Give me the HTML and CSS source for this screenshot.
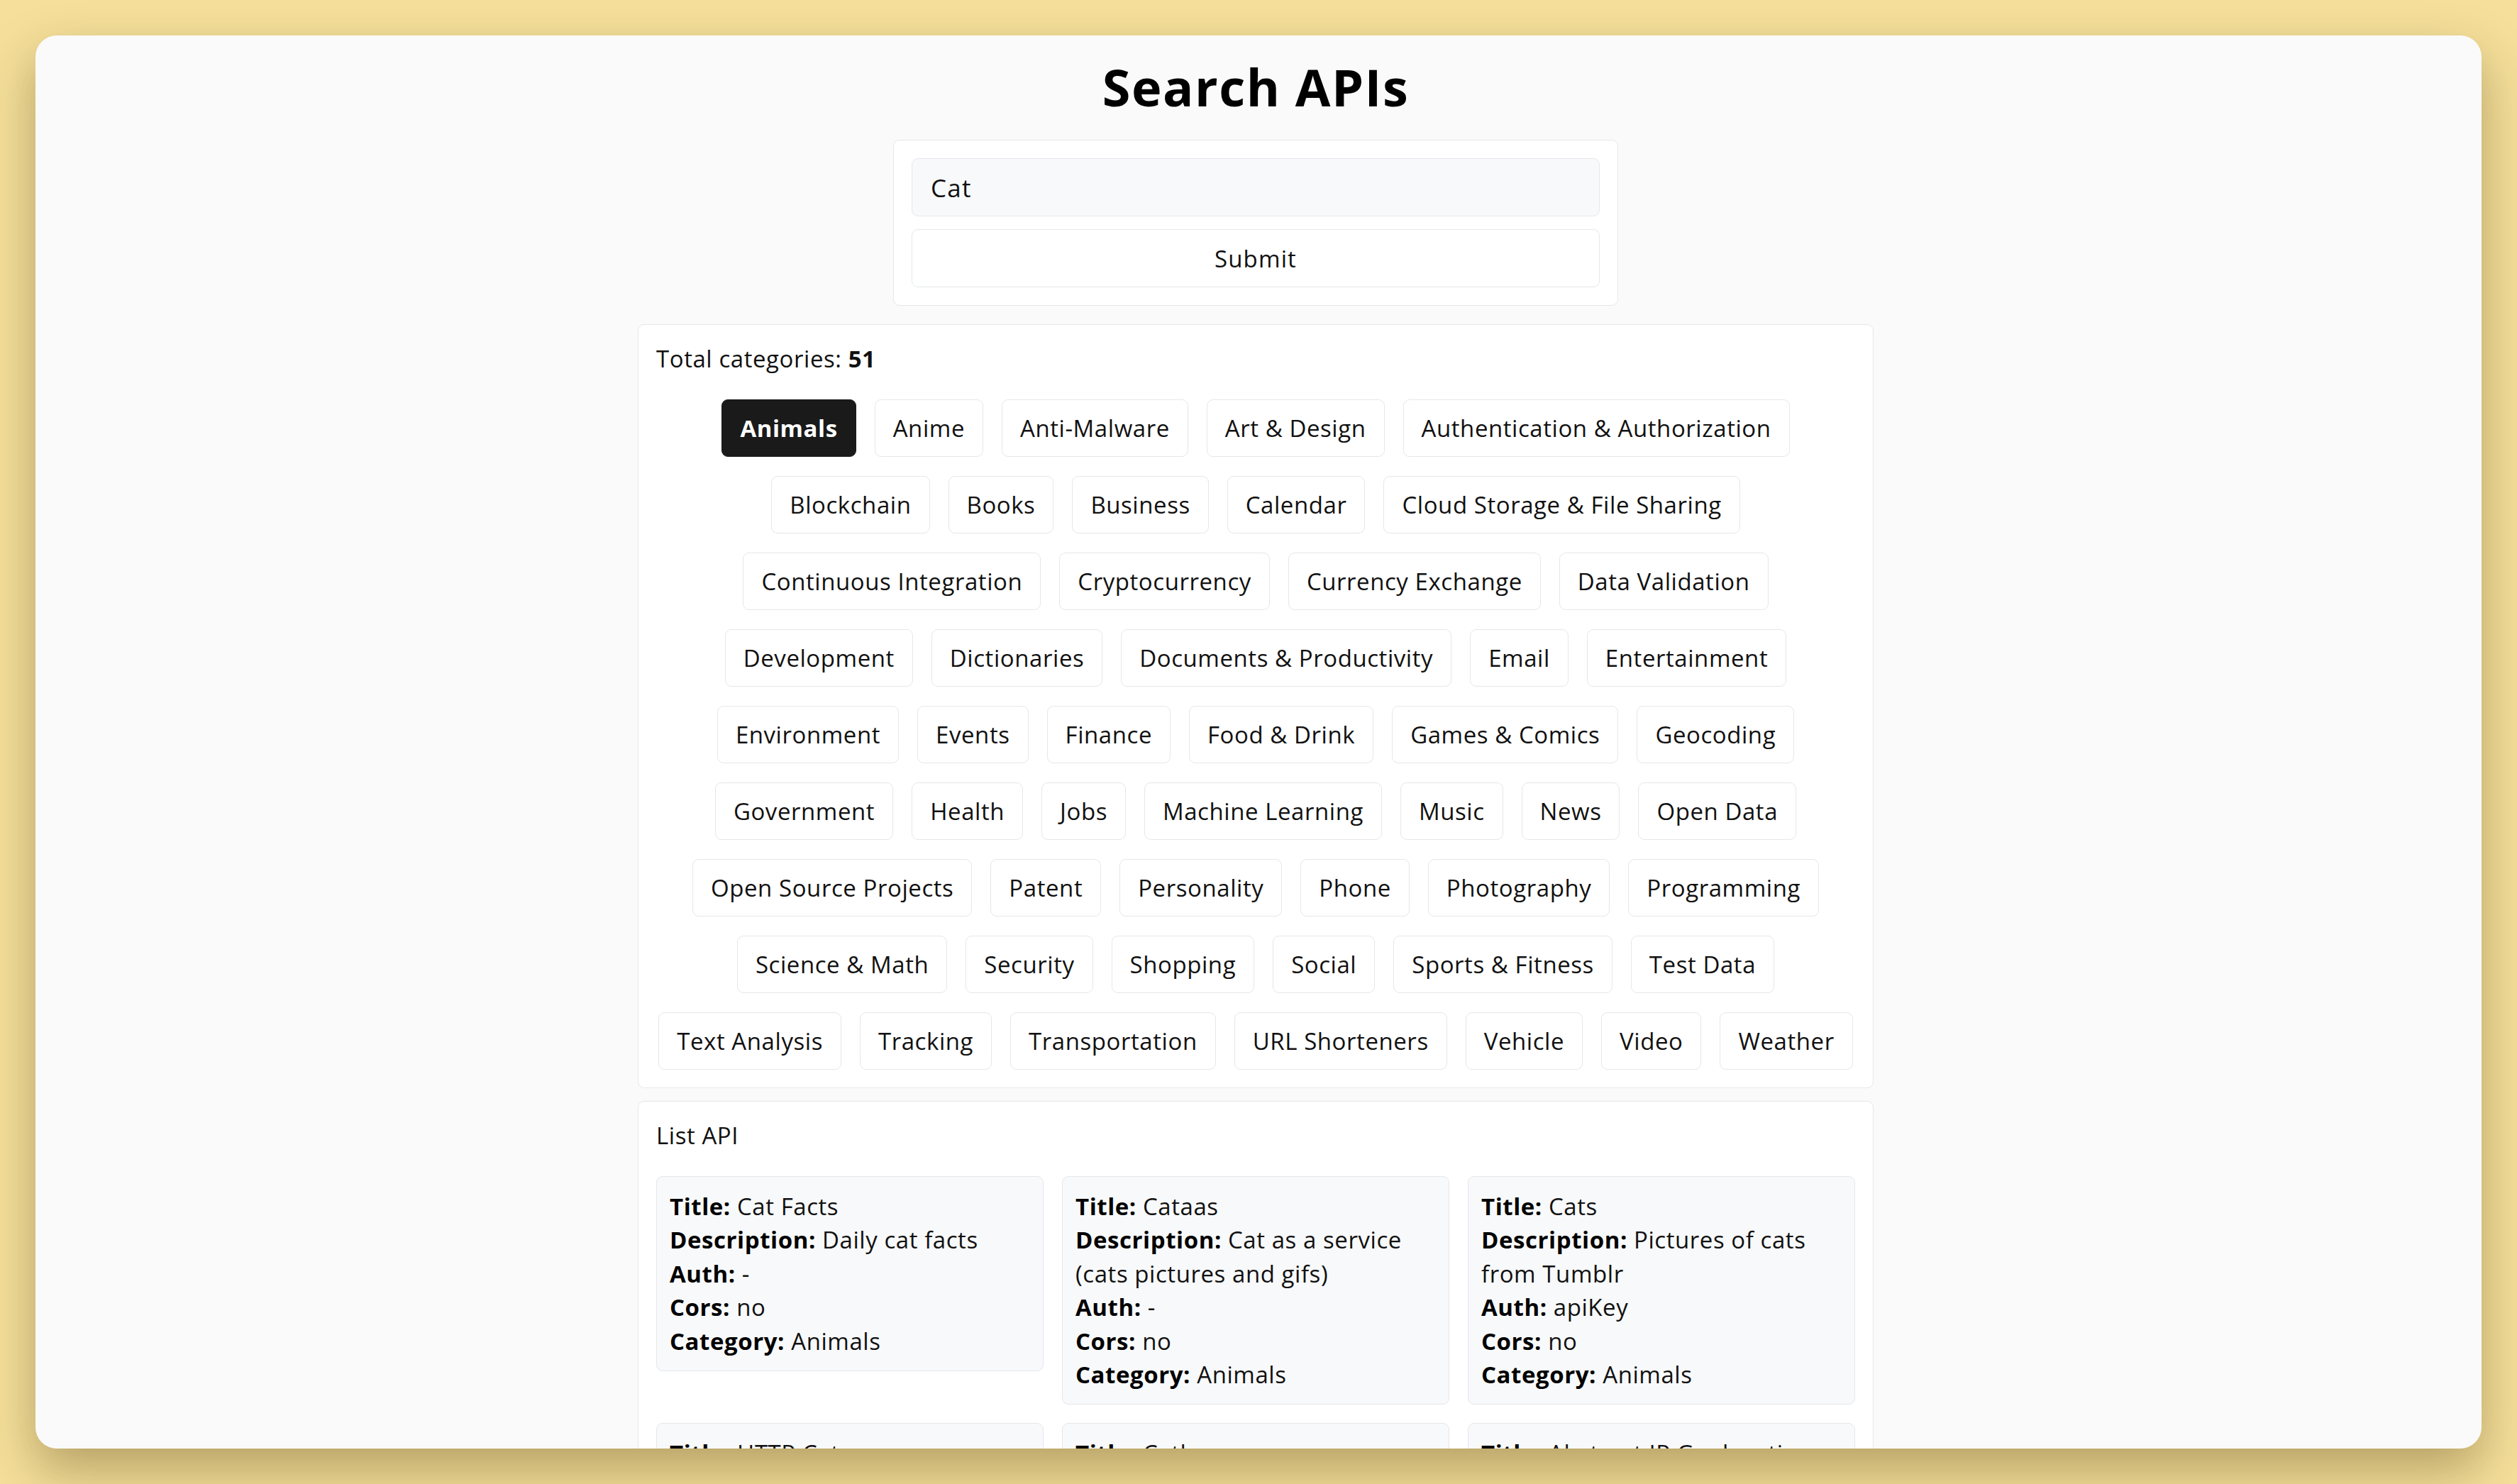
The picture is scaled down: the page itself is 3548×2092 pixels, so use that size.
FILE: index.html
```html
<!DOCTYPE html>
<html lang="en">
<head>
<meta charset="utf-8">
<title>Search APIs</title>
<link rel="stylesheet" href="styles.css">
</head>
<body>
<div class="window">
  <div class="scroll">
    <h1 class="title">Search APIs</h1>

    <form class="search-box">
      <input class="search-input" type="text" value="Cat">
      <button class="submit" type="button">Submit</button>
    </form>

    <section class="panel categories">
      <p class="panel-label">Total categories: <b>51</b></p>
      <div class="chip-rows">
        <div class="chip-row">
          <span class="chip active">Animals</span>
          <span class="chip">Anime</span>
          <span class="chip">Anti-Malware</span>
          <span class="chip">Art &amp; Design</span>
          <span class="chip">Authentication &amp; Authorization</span>
        </div>
        <div class="chip-row">
          <span class="chip">Blockchain</span>
          <span class="chip">Books</span>
          <span class="chip">Business</span>
          <span class="chip">Calendar</span>
          <span class="chip">Cloud Storage &amp; File Sharing</span>
        </div>
        <div class="chip-row">
          <span class="chip">Continuous Integration</span>
          <span class="chip">Cryptocurrency</span>
          <span class="chip">Currency Exchange</span>
          <span class="chip">Data Validation</span>
        </div>
        <div class="chip-row">
          <span class="chip">Development</span>
          <span class="chip">Dictionaries</span>
          <span class="chip">Documents &amp; Productivity</span>
          <span class="chip">Email</span>
          <span class="chip">Entertainment</span>
        </div>
        <div class="chip-row">
          <span class="chip">Environment</span>
          <span class="chip">Events</span>
          <span class="chip">Finance</span>
          <span class="chip">Food &amp; Drink</span>
          <span class="chip">Games &amp; Comics</span>
          <span class="chip">Geocoding</span>
        </div>
        <div class="chip-row">
          <span class="chip">Government</span>
          <span class="chip">Health</span>
          <span class="chip">Jobs</span>
          <span class="chip">Machine Learning</span>
          <span class="chip">Music</span>
          <span class="chip">News</span>
          <span class="chip">Open Data</span>
        </div>
        <div class="chip-row">
          <span class="chip">Open Source Projects</span>
          <span class="chip">Patent</span>
          <span class="chip">Personality</span>
          <span class="chip">Phone</span>
          <span class="chip">Photography</span>
          <span class="chip">Programming</span>
        </div>
        <div class="chip-row">
          <span class="chip">Science &amp; Math</span>
          <span class="chip">Security</span>
          <span class="chip">Shopping</span>
          <span class="chip">Social</span>
          <span class="chip">Sports &amp; Fitness</span>
          <span class="chip">Test Data</span>
        </div>
        <div class="chip-row">
          <span class="chip">Text Analysis</span>
          <span class="chip">Tracking</span>
          <span class="chip">Transportation</span>
          <span class="chip">URL Shorteners</span>
          <span class="chip">Vehicle</span>
          <span class="chip">Video</span>
          <span class="chip">Weather</span>
        </div>
      </div>
    </section>

    <section class="panel list">
      <p class="panel-label">List API</p>
      <div class="api-grid">
        <div class="api-card">
          <p><b>Title:</b> Cat Facts</p>
          <p><b>Description:</b> Daily cat facts</p>
          <p><b>Auth:</b> -</p>
          <p><b>Cors:</b> no</p>
          <p><b>Category:</b> Animals</p>
        </div>
        <div class="api-card">
          <p><b>Title:</b> Cataas</p>
          <p><b>Description:</b> Cat as a service (cats pictures and gifs)</p>
          <p><b>Auth:</b> -</p>
          <p><b>Cors:</b> no</p>
          <p><b>Category:</b> Animals</p>
        </div>
        <div class="api-card">
          <p><b>Title:</b> Cats</p>
          <p><b>Description:</b> Pictures of cats from Tumblr</p>
          <p><b>Auth:</b> apiKey</p>
          <p><b>Cors:</b> no</p>
          <p><b>Category:</b> Animals</p>
        </div>
        <div class="api-card">
          <p><b>Title:</b> HTTP Cat</p>
          <p><b>Description:</b> Cat for every HTTP Status</p>
          <p><b>Auth:</b> -</p>
          <p><b>Cors:</b> yes</p>
          <p><b>Category:</b> Animals</p>
        </div>
        <div class="api-card">
          <p><b>Title:</b> Cathay</p>
          <p><b>Auth:</b> -</p>
          <p><b>Cors:</b> no</p>
        </div>
        <div class="api-card">
          <p><b>Title:</b> Abstract IP Geolocation</p>
          <p><b>Auth:</b> apiKey</p>
          <p><b>Cors:</b> yes</p>
          <p><b>Category:</b> Geocoding</p>
        </div>
      </div>
    </section>
  </div>
</div>
</body>
</html>
```
FILE: styles.css
```css
* {
  box-sizing: border-box;
}

html, body {
  margin: 0;
  padding: 0;
}

body {
  background: #f5df9a;
  font-family: "Open Sans", "Noto Sans", sans-serif;
  color: #111111;
  letter-spacing: 0.035em;
}

.window {
  margin: 50px;
  height: 1992px;
  border-radius: 30px;
  background: #fafafa;
  overflow: hidden;
  box-shadow: 0 30px 70px rgba(60, 40, 0, 0.34);
}

.scroll {
  padding-right: 8px;
}

.title {
  margin: 0;
  padding-top: 22px;
  font-size: 72px;
  line-height: 100px;
  font-weight: 700;
  text-align: center;
  color: #000;
  letter-spacing: 1.5px;
}

.search-box {
  width: 1022px;
  margin: 25px auto 0;
  padding: 25px;
  background: #ffffff;
  border: 1px solid #e5e7eb;
  border-radius: 9px;
  display: flex;
  flex-direction: column;
  gap: 18px;
}

.search-input,
.submit {
  height: 82px;
  border: 1px solid #e5e7eb;
  border-radius: 9px;
  font-family: inherit;
  letter-spacing: 0.035em;
  color: #111;
}

.search-input {
  background: #f8f9fa;
  padding: 0 26px;
  font-size: 35px;
}

.submit {
  background: #ffffff;
  font-size: 33px;
}

.panel {
  width: 1742px;
  margin: 0 auto;
  background: #ffffff;
  border: 1px solid #e5e7eb;
  border-radius: 9px;
  padding: 24px 25px 25px;
}

.categories {
  margin-top: 26px;
}

.list {
  margin-top: 18px;
}

.panel-label {
  margin: 0;
  font-size: 33px;
  line-height: 47px;
}

.panel-label b {
  font-weight: 700;
}

.chip-rows {
  margin-top: 34px;
  display: flex;
  flex-direction: column;
  gap: 27px;
}

.chip-row {
  display: flex;
  justify-content: center;
  gap: 26px;
}

.chip {
  display: block;
  padding: 17px 25px;
  font-size: 33px;
  line-height: 45px;
  border: 1px solid #e5e7eb;
  border-radius: 9px;
  background: #ffffff;
  white-space: nowrap;
}

.chip.active {
  background: #1a1a1a;
  border-color: #1a1a1a;
  color: #ffffff;
  font-weight: 700;
}

.api-grid {
  margin-top: 34px;
  display: grid;
  grid-template-columns: repeat(3, 1fr);
  gap: 26px;
  align-items: start;
}

.api-card {
  background: #f8f9fa;
  border: 1px solid #e5e7eb;
  border-radius: 9px;
  padding: 18px;
  font-size: 33px;
  line-height: 47.4px;
}

.api-card p {
  margin: 0;
}

.api-card b {
  font-weight: 700;
  color: #000;
}
```
